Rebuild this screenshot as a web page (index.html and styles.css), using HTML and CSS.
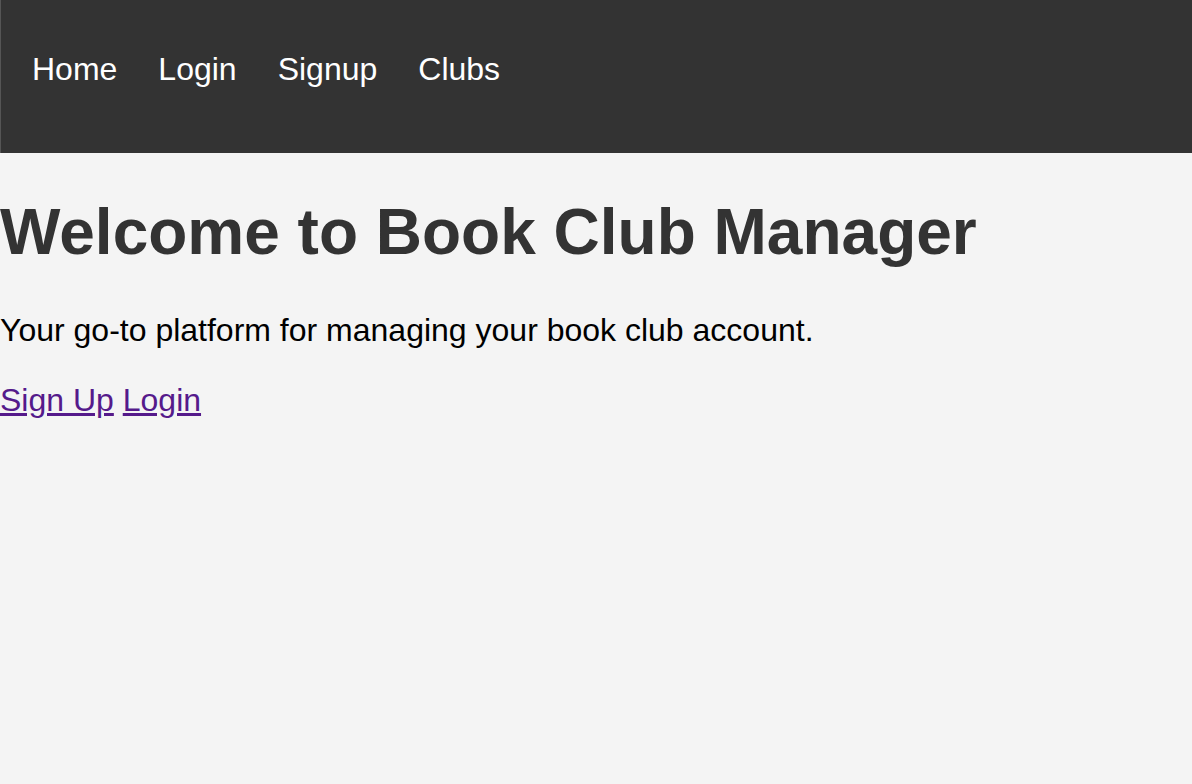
FILE: index.html
```html
<!DOCTYPE html>
<html lang="en">
<head>
<meta charset="utf-8">
<title>Book Club Manager</title>
<link rel="stylesheet" href="styles.css">
</head>
<body>
<header class="site-header">
  <nav class="nav">
    <a href="#" class="nav-link">Home</a>
    <a href="#" class="nav-link">Login</a>
    <a href="#" class="nav-link">Signup</a>
    <a href="#" class="nav-link">Clubs</a>
  </nav>
</header>
<main class="main">
  <h1 class="title">Welcome to Book Club Manager</h1>
  <p class="lead">Your go-to platform for managing your book club account.</p>
  <p class="actions"><a href="#" class="action-link">Sign Up</a> <a href="#" class="action-link">Login</a></p>
</main>
</body>
</html>
```
FILE: styles.css
```css
html, body {
  margin: 0;
  padding: 0;
  background: #f4f4f4;
  font-family: "Liberation Sans", Arial, sans-serif;
}
.site-header {
  background: #333;
  height: 153px;
  border-left: 1px solid #555;
  display: flex;
  align-items: center;
  padding-left: 31px;
  padding-bottom: 14px;
  box-sizing: border-box;
}
.nav {
  display: flex;
  gap: 41px;
}
.nav-link {
  color: #fff;
  text-decoration: none;
  font-size: 32px;
}
.main {
  padding: 0;
}
.title {
  margin: 42px 0 0;
  font-size: 64px;
  font-weight: bold;
  color: #333;
}
.lead {
  margin: 43px 0 0;
  font-size: 32px;
  color: #000;
}
.actions {
  margin: 33px 0 0;
  font-size: 32px;
}
.action-link {
  color: #551a8b;
}
```
